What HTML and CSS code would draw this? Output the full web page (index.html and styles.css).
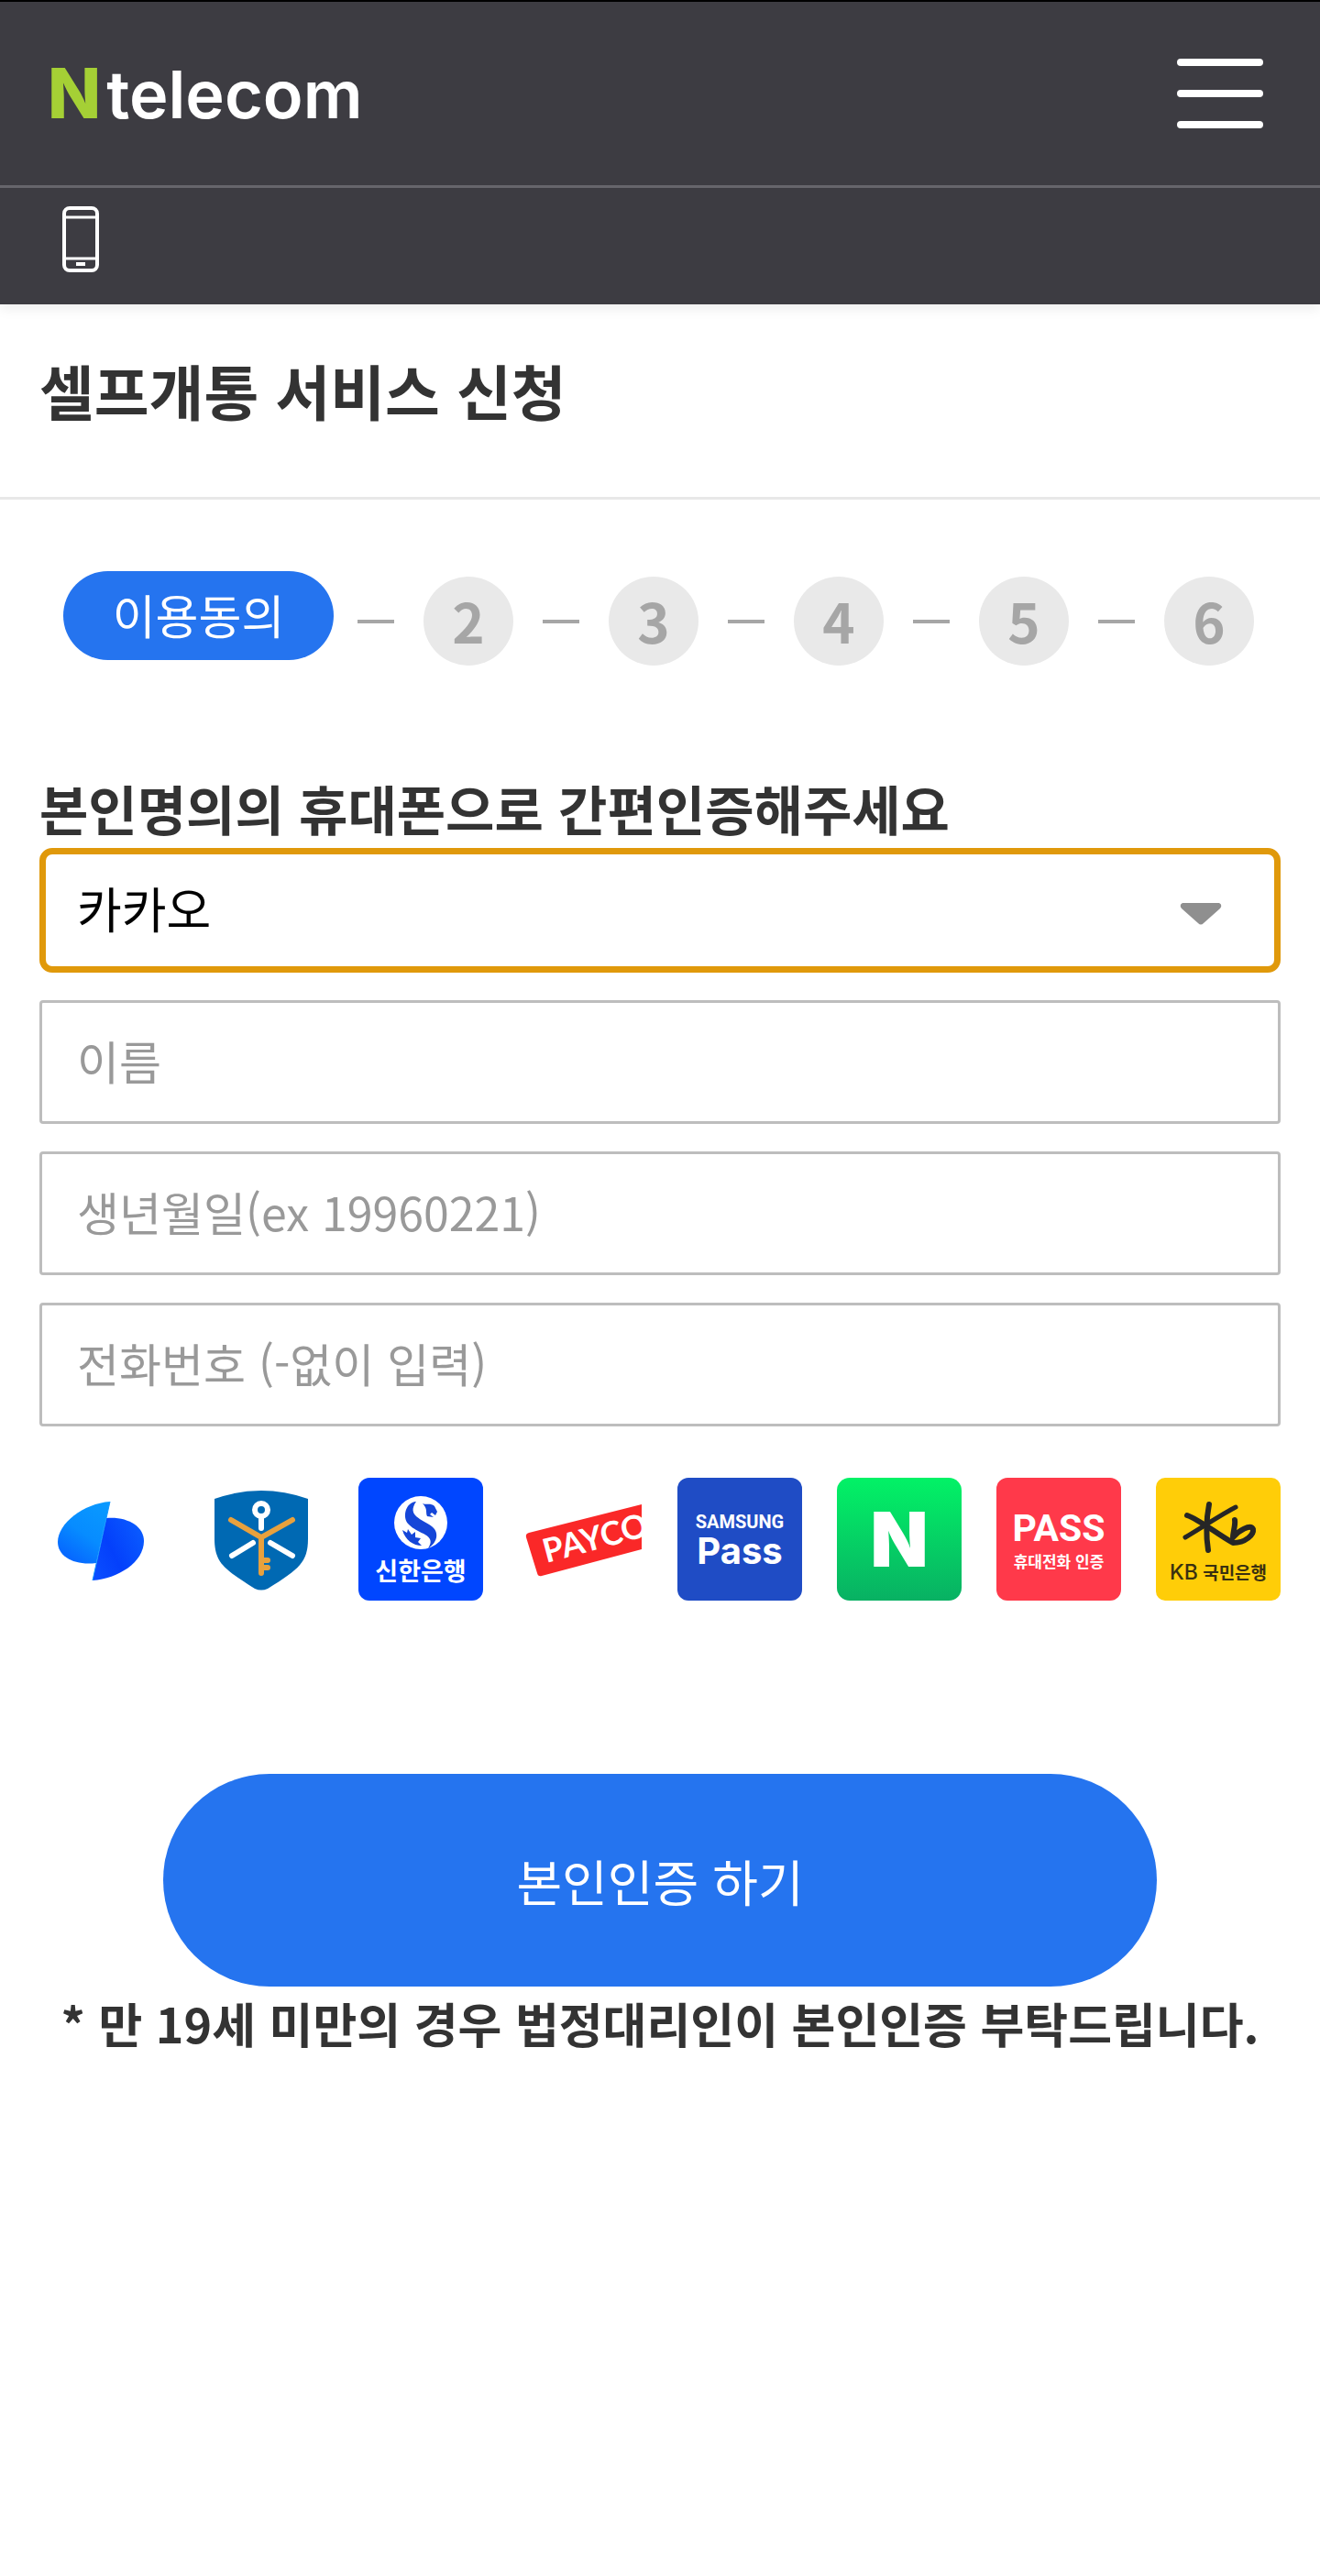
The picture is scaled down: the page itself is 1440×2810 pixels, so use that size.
FILE: index.html
```html
<!DOCTYPE html>
<html lang="ko">
<head>
	<meta charset="UTF-8">
	<meta name="viewport" content="width=device-width, initial-scale=1">
	<title>셀프개통 서비스 신청</title>
	<link rel="stylesheet" href="styles.css">
</head>
<body>
	<header class="header">
		<div class="header_top">
			<a href="#" class="logo"><span class="logo_n">N</span><span>telecom</span></a>
			<button type="button" class="btn_menu" aria-label="메뉴">
				<span></span>
				<span></span>
				<span></span>
			</button>
		</div>
		<nav class="header_nav">
			<a href="#" class="nav_phone" aria-label="휴대폰">
				<svg width="40" height="72" viewBox="0 0 40 72" fill="none" stroke="#fff" stroke-width="4">
					<rect x="2" y="2" width="36" height="68" rx="6"/>
					<path d="M2 12H38M2 57H38" stroke-width="3"/>
					<path d="M15 63H25"/>
				</svg>
			</a>
		</nav>
	</header>

	<h1 class="title">셀프개통 서비스 신청</h1>

	<main class="content">
		<ol class="steps">
			<li class="on"><span>이용동의</span></li>
			<li><span>2</span></li>
			<li><span>3</span></li>
			<li><span>4</span></li>
			<li><span>5</span></li>
			<li><span>6</span></li>
		</ol>

		<form class="auth" action="#">
			<label class="auth_title" for="authType">본인명의의 휴대폰으로 간편인증해주세요</label>
			<div class="select_box">
				<select id="authType" name="authType">
					<option>카카오</option>
					<option>토스</option>
					<option>신한은행</option>
					<option>페이코</option>
					<option>삼성패스</option>
					<option>네이버</option>
					<option>PASS</option>
					<option>국민은행</option>
				</select>
				<svg class="select_arrow" width="46" height="24" viewBox="0 0 46 24"><path d="M3 0H43Q47 2 44 6L26 22Q23 25 20 22L2 6Q-1 2 3 0Z" fill="#8f8f8f"/></svg>
			</div>
			<input type="text" name="name" placeholder="이름" aria-label="이름">
			<input type="text" name="birth" placeholder="생년월일(ex 19960221)" aria-label="생년월일">
			<input type="tel" name="phone" placeholder="전화번호 (-없이 입력)" aria-label="전화번호">

			<ul class="auth_list">
				<!-- 토스 -->
				<li>
					<svg viewBox="0 0 136 134">
						<defs>
							<linearGradient id="tossL" x1="1" y1="0" x2="0.400" y2="1"><stop offset="0" stop-color="#0a9bff"/><stop offset="0.600" stop-color="#078cff"/><stop offset="1" stop-color="#0669ff"/></linearGradient>
							<linearGradient id="tossR" x1="0" y1="0.800" x2="1" y2="0.200"><stop offset="0" stop-color="#0a4dff"/><stop offset="0.400" stop-color="#0440fb"/><stop offset="1" stop-color="#0a5cff"/></linearGradient>
						</defs>
						<path d="M73 44C96 42 114 53 114 69C114 92 86 110 58 112Z" fill="url(#tossR)"/>
						<path d="M77 26C48 28 20 50 20 70C20 86 38 96 62 93Z" fill="url(#tossL)"/>
						<path d="M77 26L58 112" stroke="#1597ff" stroke-width="1"/>
					</svg>
				</li>
				<!-- 금융인증서 -->
				<li>
					<svg viewBox="0 0 136 134" fill="none" stroke-width="6" stroke-linecap="round">
						<path d="M17 23Q68 5 119 23V66C119 92 110 99 75 121Q68 124 61 121C26 99 17 92 17 66Z" fill="#0069b3"/>
						<g stroke="#fff"><circle cx="68" cy="35" r="7"/><path d="M68 43V55M59 71L36 85M78 71L102 85"/></g>
						<path d="M35 46L68 65L102 46M68 65V104M70 90H75M70 98H75" stroke="#e8a13d"/>
					</svg>
				</li>
				<!-- 신한은행 -->
				<li>
					<svg viewBox="0 0 136 134">
						<rect width="136" height="134" rx="12" fill="#0046ff"/>
						<circle cx="68" cy="49" r="29" fill="#fff"/>
						<g fill="#1546d8">
							<path d="M63 26C51 27 48 43 54 50C62 59 76 61 78 67C80 71 77 75 76 77C87 70 88 59 80 53C70 45 52 42 63 26Z"/>
							<path d="M70 28C74 30 79 27 83 31L86 37L84 41L80 38L78 40L82 43L75 42C73 38 76 34 70 28Z"/>
							<path d="M48 57L53 60L54 56L58 62L62 59L62 65L68 66L65 70L69 74C60 74 51 68 48 57Z"/>
						</g>
						<text x="68" y="112" class="t_shinhan">신한은행</text>
					</svg>
				</li>
				<!-- 페이코 -->
				<li>
					<svg viewBox="0 0 136 134">
						<path d="M12 60L135 29V78L26 107Q22 108 21 104L9 65Q8 61 12 60Z" fill="#fa2828"/>
						<svg width="135" height="134"><text x="31" y="93" class="t_payco" transform="rotate(-15 31 93)">PAYCO</text></svg>
					</svg>
				</li>
				<!-- 삼성패스 -->
				<li>
					<svg viewBox="0 0 136 134">
						<rect width="136" height="134" rx="12" fill="#1f4cc5"/>
						<text x="68" y="55" class="t_samsung">SAMSUNG</text>
						<text x="68" y="94" class="t_samsung_pass">Pass</text>
					</svg>
				</li>
				<!-- 네이버 -->
				<li>
					<svg viewBox="0 0 136 134">
						<defs><linearGradient id="naver" x1="0" y1="0" x2="0" y2="1"><stop offset="0" stop-color="#02f266"/><stop offset="1" stop-color="#08b163"/></linearGradient></defs>
						<rect width="136" height="134" rx="14" fill="url(#naver)"/>
						<text x="68" y="97" class="t_naver">N</text>
					</svg>
				</li>
				<!-- PASS -->
				<li>
					<svg viewBox="0 0 136 134">
						<rect width="136" height="134" rx="12" fill="#ff394a"/>
						<text x="68" y="69" class="t_pass">PASS</text>
						<text x="68" y="98" class="t_pass_sub">휴대전화 인증</text>
					</svg>
				</li>
				<!-- 국민은행 -->
				<li>
					<svg viewBox="0 0 136 134">
						<rect width="136" height="134" rx="10" fill="#ffcd08"/>
						<g fill="none" stroke="#262626" stroke-width="6" stroke-linecap="round" stroke-linejoin="round">
							<path d="M58 29C55 45 54 60 57 79"/>
							<path d="M34 41C48 46 66 61 84 71C98 71 107 62 106 56C103 50 90 58 84 65C84 59 87 52 86 46"/>
							<path d="M87 32C75 38 52 53 32 65" stroke-width="5"/>
						</g>
						<text x="68" y="111" class="t_kb"><tspan class="t_kb_en">KB</tspan> 국민은행</text>
					</svg>
				</li>
			</ul>

			<button type="submit" class="btn_submit">본인인증 하기</button>
			<p class="notice">* 만 19세 미만의 경우 법정대리인이 본인인증 부탁드립니다.</p>
		</form>
	</main>
</body>
</html>
```
FILE: styles.css
```css
*{
	box-sizing: border-box;
}

body{
	margin: 0;
	background-color: #fff;
	color: #333;
	font-family: "Noto Sans CJK KR", "Noto Sans", sans-serif;
	font-size: 50px;
}

ul, ol{
	margin: 0;
	padding: 0;
	list-style: none;
}

a{
	text-decoration: none;
}

/* header */
.header{
	border-top: 2px solid #000;
	background-color: #3d3c42;
	box-shadow: 0 4px 14px rgba(0,0,0,0.08);
}

.header_top{
	display: flex;
	justify-content: space-between;
	align-items: center;
	height: 203px;
	padding: 0 62px 0 52px;
	border-bottom: 3px solid #66656b;
}

.logo{
	display: flex;
	align-items: baseline;
	gap: 6px;
	color: #fff;
	font-family: Inter, sans-serif;
	font-size: 72px;
	font-weight: 600;
	line-height: 80px;
}

.logo_n{
	color: #a5d035;
	font-size: 76px;
	font-weight: 800;
}

.btn_menu{
	display: flex;
	flex-direction: column;
	gap: 26px;
	width: 94px;
	padding: 0;
	border: 0;
	background: none;
}

.btn_menu span{
	height: 8px;
	border-radius: 4px;
	background-color: #fff;
}

.header_nav{
	height: 127px;
	padding: 20px 68px;
}

.nav_phone, .nav_phone svg{
	display: block;
	width: 40px;
}

.title{
	margin: 0;
	padding: 46px 43px 70px;
	border-bottom: 3px solid #e8e8e8;
	font-size: 65px;
	font-weight: 700;
	line-height: 94px;
}

.content{
	padding: 78px 43px 0;
}

/* steps */
.steps{
	display: flex;
	align-items: flex-start;
	padding-left: 26px;
}

.steps li{
	display: flex;
	align-items: center;
	margin-top: 6px;
	color: #a6a6a6;
	font-size: 60px;
	font-weight: 700;
}

.steps li + li:before{
	content: "";
	width: 40px;
	height: 4px;
	margin: 0 32px;
	background-color: #a6a6a6;
}

.steps .on + li:before{
	margin-left: 26px;
}

.steps span{
	width: 98px;
	height: 97px;
	border-radius: 50%;
	background-color: #e9e9e9;
	line-height: 94px;
	text-align: center;
}

.steps .on{
	margin-top: 0;
	color: #fff;
	font-size: 51px;
	font-weight: 400;
}

.steps .on span{
	width: 295px;
	border-radius: 49px;
	background-color: #2574ef;
}

/* form */
.auth{
	display: flex;
	flex-direction: column;
	padding-top: 117px;
}

.auth_title{
	padding-bottom: 6px;
	font-size: 58px;
	font-weight: 700;
	line-height: 76px;
}

.select_box{
	position: relative;
}

.auth select,
.auth input{
	display: block;
	width: 100%;
	height: 135px;
	border: 3px solid #bdbdbd;
	border-radius: 4px;
	background-color: #fff;
	color: #000;
	font-family: inherit;
	font-size: 50px;
	padding: 0 38px 6px;
}

.auth select{
	appearance: none;
	height: 136px;
	padding: 0 34px 6px;
	border: 7px solid #e0990b;
	border-radius: 14px;
	font-size: 53px;
	outline: none;
}

.auth input{
	margin-top: 30px;
}

.auth input::placeholder{
	color: #999;
	opacity: 1;
}

.select_arrow{
	position: absolute;
	top: 60px;
	right: 64px;
	pointer-events: none;
}

.auth_list{
	display: flex;
	justify-content: space-between;
	margin-top: 56px;
}

.auth_list li{
	width: 136px;
}

.auth_list svg{
	display: block;
}

.auth_list text{
	fill: #fff;
	font-weight: 700;
	text-anchor: middle;
}

.auth_list .t_shinhan{
	font-size: 27px;
}

.auth_list .t_payco{
	font-family: Lato, sans-serif;
	font-size: 36px;
	text-anchor: start;
}

.auth_list .t_samsung{
	font-family: Roboto, sans-serif;
	font-size: 20px;
}

.auth_list .t_samsung_pass{
	font-family: Inter, sans-serif;
	font-size: 40px;
}

.auth_list .t_naver{
	font-family: Inter, sans-serif;
	font-size: 82px;
	font-weight: 900;
}

.auth_list .t_pass{
	font-family: Roboto, sans-serif;
	font-size: 41px;
}

.auth_list .t_pass_sub{
	font-size: 17px;
}

.auth_list .t_kb{
	fill: #3a3010;
	font-size: 19px;
}

.auth_list .t_kb_en{
	font-family: Inter, sans-serif;
	font-size: 23px;
	font-weight: 500;
}

.btn_submit{
	align-self: center;
	width: 80%;
	height: 232px;
	margin-top: 189px;
	border: 0;
	border-radius: 116px;
	background-color: #2574ef;
	color: #fff;
	font-family: inherit;
	font-size: 54px;
}

.notice{
	margin: 0;
	font-size: 52px;
	font-weight: 700;
	line-height: 80px;
	text-align: center;
}
```
